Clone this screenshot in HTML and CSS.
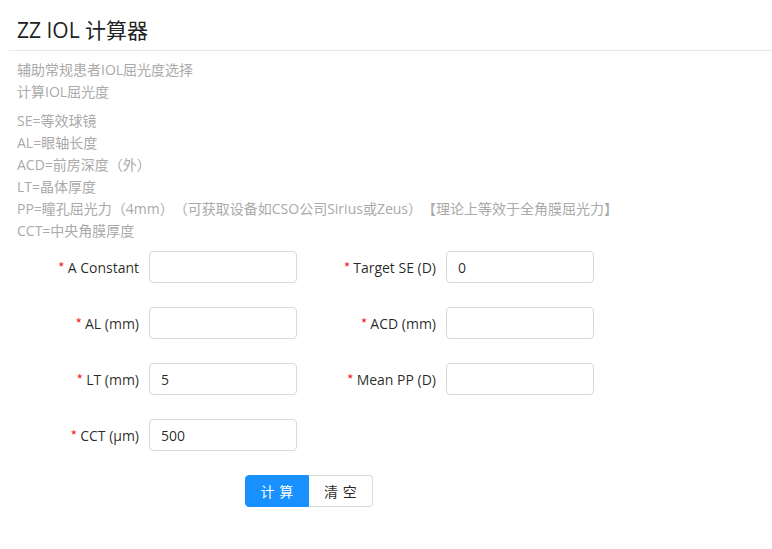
FILE: index.html
```html
<!DOCTYPE html>
<html lang="zh">
<head>
<meta charset="utf-8">
<title>ZZ IOL 计算器</title>
<link rel="stylesheet" href="styles.css">
</head>
<body>
<div class="page">
  <div class="header">ZZ IOL 计算器</div>
  <div class="content">
    <div class="desc desc-top">
      <div>辅助常规患者IOL屈光度选择</div>
      <div>计算IOL屈光度</div>
    </div>
    <div class="desc desc-terms">
      <div>SE=等效球镜</div>
      <div>AL=眼轴长度</div>
      <div>ACD=前房深度（外）</div>
      <div>LT=晶体厚度</div>
      <div>PP=瞳孔屈光力（4mm）（可获取设备如CSO公司Sirius或Zeus）【理论上等效于全角膜屈光力】</div>
      <div>CCT=中央角膜厚度</div>
    </div>
    <form class="form">
      <div class="field"><label class="label"><span class="req">*</span>A Constant</label><input class="input" type="text" value=""></div>
      <div class="field"><label class="label"><span class="req">*</span>Target SE (D)</label><input class="input" type="text" value="0"></div>
      <div class="field"><label class="label"><span class="req">*</span>AL (mm)</label><input class="input" type="text" value=""></div>
      <div class="field"><label class="label"><span class="req">*</span>ACD (mm)</label><input class="input" type="text" value=""></div>
      <div class="field"><label class="label"><span class="req">*</span>LT (mm)</label><input class="input" type="text" value="5"></div>
      <div class="field"><label class="label"><span class="req">*</span>Mean PP (D)</label><input class="input" type="text" value=""></div>
      <div class="field"><label class="label"><span class="req">*</span>CCT (μm)</label><input class="input" type="text" value="500"></div>
    </form>
    <div class="actions">
      <button class="btn btn-primary" type="button"><span>计算</span></button><button class="btn" type="button"><span>清空</span></button>
    </div>
  </div>
</div>
</body>
</html>
```
FILE: styles.css
```css
* { box-sizing: border-box; }
body {
  margin: 0;
  background: #fff;
  font-family: "Open Sans", "Noto Sans CJK SC", sans-serif;
  color: rgba(0, 0, 0, 0.85);
  text-spacing-trim: space-all;
}
.page {
  padding-left: 9px;
}
.header {
  height: 51px;
  padding: 16px 8px 0;
  font-size: 21px;
  line-height: 28px;
  color: #222;
  border-bottom: 1px solid #e8e8e8;
}
.content {
  padding: 0 0 0 8px;
}
.desc {
  font-size: 14px;
  line-height: 22px;
  color: #aaa;
}
.desc-top { margin-top: 8px; }
.desc-terms { margin-top: 7px; }
.form {
  margin: 9px 0 0 -8px;
  display: grid;
  grid-template-columns: 297px 297px;
  row-gap: 24px;
}
.field {
  display: flex;
  align-items: center;
  height: 32px;
}
.label {
  width: 140px;
  padding-right: 10px;
  text-align: right;
  font-size: 14px;
  color: rgba(0, 0, 0, 0.85);
  white-space: nowrap;
}
.req {
  color: #f5222d;
  font-family: SimSun, "Noto Sans CJK SC", sans-serif;
  font-size: 14px;
  margin-right: 3px;
}
.input {
  width: 148px;
  height: 32px;
  padding: 4px 11px;
  border: 1px solid #d9d9d9;
  border-radius: 4px;
  font-family: inherit;
  font-size: 14px;
  color: rgba(0, 0, 0, 0.85);
  outline: none;
}
.actions {
  margin: 24px 0 0 228px;
  display: flex;
}
.btn {
  width: 64px;
  height: 32px;
  padding: 0;
  border: 1px solid #d9d9d9;
  background: #fff;
  font-family: inherit;
  font-size: 14px;
  color: rgba(0, 0, 0, 0.85);
  cursor: pointer;
}
.btn span {
  letter-spacing: 0.34em;
  margin-right: -0.34em;
}
.btn-primary {
  background: #1890ff;
  border-color: #1890ff;
  color: #fff;
  border-radius: 4px 0 0 4px;
}
.btn-primary + .btn {
  border-left: 0;
  border-radius: 0 4px 4px 0;
}
```
